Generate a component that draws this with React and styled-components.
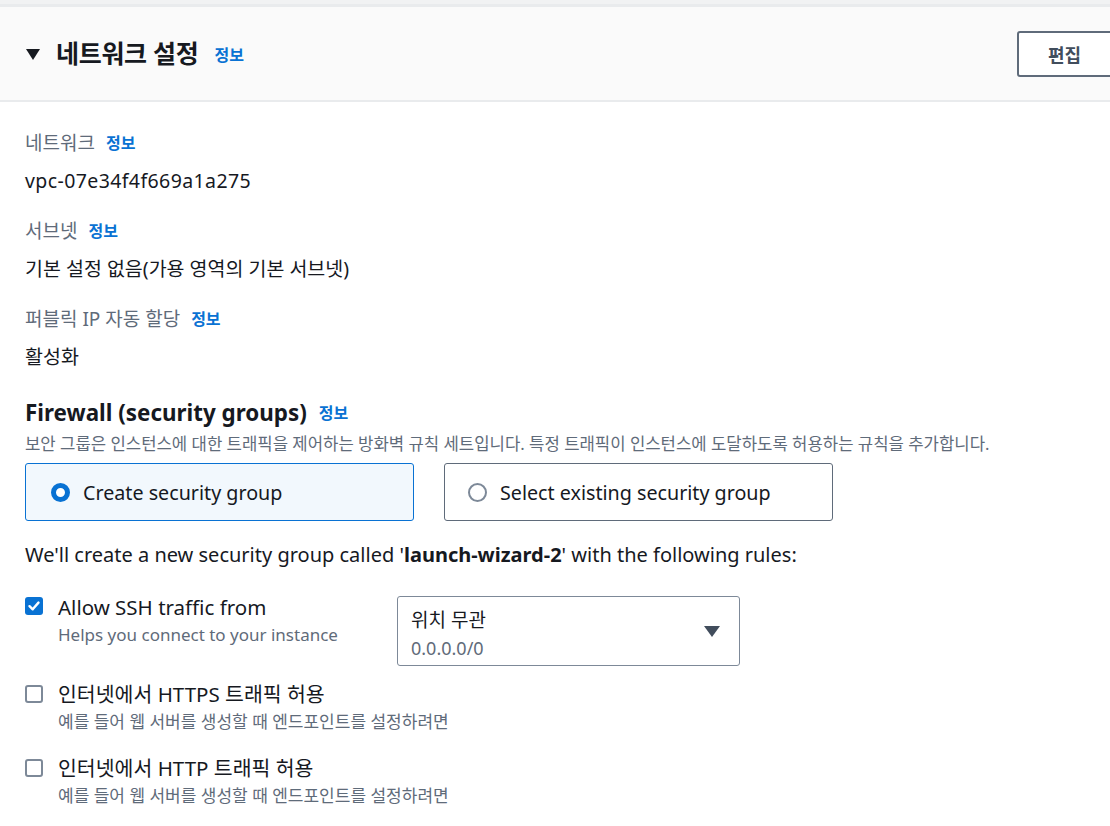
import React from 'react';
import styled, { createGlobalStyle } from 'styled-components';

const GlobalStyle = createGlobalStyle`
  body {
    margin: 0;
    background: #ffffff;
    font-family: 'Noto Sans', 'Noto Sans CJK KR', sans-serif;
    color: #16191f;
  }
`;

const Page = styled.div`
  width: 1110px;
  height: 826px;
  overflow: hidden;
  border-top: 4px solid #f1f2f3;
`;

const Header = styled.div`
  display: flex;
  align-items: center;
  justify-content: space-between;
  height: 93px;
  padding-left: 26px;
  background: #fafafa;
  border-top: 3px solid #e9ebed;
  border-bottom: 2px solid #e9ebed;
  overflow: hidden;
`;

const TitleWrap = styled.div`
  display: flex;
  align-items: center;
`;

const Caret = styled.span`
  width: 0;
  height: 0;
  border-left: 7px solid transparent;
  border-right: 7px solid transparent;
  border-top: 11px solid #16191f;
  margin-right: 16px;
  margin-top: 1px;
`;

const Title = styled.h2`
  margin: 0 0 3px;
  font-size: 25px;
  font-weight: 700;
  letter-spacing: -0.3px;
  color: #16191f;
`;

const Info = styled.a`
  color: #0972d3;
  font-weight: 700;
  font-size: ${(p) => p.size || 16}px;
  text-decoration: none;
  margin-left: ${(p) => p.gap || 11}px;
`;

const EditButton = styled.button`
  width: 100px;
  height: 46px;
  margin-right: -7px;
  border: 2px solid #5f6b7a;
  border-radius: 3px;
  background: #ffffff;
  font-family: inherit;
  font-size: 18px;
  font-weight: 700;
  color: #414d5c;
  padding: 0;
  text-align: left;
  text-indent: 29px;
`;

const Body = styled.div`
  padding: 30px 25px 0 25px;
`;

const Field = styled.div`
  margin-bottom: 26px;
`;

const Label = styled.div`
  display: flex;
  align-items: center;
  font-size: 19px;
  line-height: 22px;
  color: #5f6b7a;
  margin-bottom: 14px;
`;

const Value = styled.div`
  font-size: 19.5px;
  line-height: 26px;
  color: #16191f;
  letter-spacing: ${(p) => (p.mono ? 0.4 : 0)}px;
`;

const SectionTitle = styled.h3`
  display: flex;
  align-items: center;
  margin: 30px 0 0;
  font-size: 22.4px;
  line-height: 26px;
  font-weight: 700;
  color: #16191f;
`;

const Desc = styled.div`
  margin-top: 8px;
  font-size: 16.7px;
  line-height: 20px;
  color: #5f6b7a;
  white-space: nowrap;
`;

const Cards = styled.div`
  display: flex;
  gap: 30px;
  margin-top: 9px;
`;

const Card = styled.div`
  width: 389px;
  height: 58px;
  box-sizing: border-box;
  display: flex;
  align-items: center;
  padding-left: ${(p) => (p.selected ? 25 : 23)}px;
  border: 1px solid ${(p) => (p.selected ? '#0972d3' : '#5f6b7a')};
  border-radius: 3px;
  background: ${(p) => (p.selected ? '#f2f8fd' : '#ffffff')};
  font-size: 19.7px;
  color: #16191f;
`;

const Radio = styled.span`
  width: 19px;
  height: 19px;
  box-sizing: border-box;
  border-radius: 50%;
  margin-right: 13px;
  flex: none;
  border: ${(p) => (p.checked ? '5.5px solid #0972d3' : '2px solid #7d8998')};
  background: #ffffff;
`;

const Notice = styled.div`
  margin-top: 22px;
  font-size: 20px;
  line-height: 24px;
  color: #16191f;
  white-space: nowrap;
  b {
    font-weight: 700;
  }
`;

const RuleRow = styled.div`
  display: flex;
  align-items: flex-start;
  margin-top: ${(p) => p.top}px;
`;

const RuleLeft = styled.div`
  display: flex;
  align-items: flex-start;
  width: ${(p) => (p.width ? `${p.width}px` : 'auto')};
  flex: none;
`;

const Box = styled.span`
  width: 18px;
  height: 18px;
  box-sizing: border-box;
  flex: none;
  margin-top: ${(p) => (p.checked ? 1 : 2)}px;
  margin-right: 15px;
  border-radius: 3px;
  display: flex;
  align-items: center;
  justify-content: center;
  background: ${(p) => (p.checked ? '#0972d3' : '#ffffff')};
  border: ${(p) => (p.checked ? 'none' : '2px solid #7d8998')};
`;

const RuleText = styled.div`
  display: flex;
  flex-direction: column;
  white-space: nowrap;
`;

const RuleTitle = styled.div`
  font-size: 20.5px;
  line-height: 22px;
  color: #16191f;
`;

const RuleHint = styled.div`
  margin-top: 7px;
  font-size: 17px;
  line-height: 20px;
  color: #5f6b7a;
`;

const Select = styled.div`
  width: 343px;
  height: 70px;
  box-sizing: border-box;
  display: flex;
  align-items: center;
  justify-content: space-between;
  padding: 0 19px 0 13px;
  border: 1px solid #7d8998;
  border-radius: 3px;
`;

const SelectText = styled.div`
  display: flex;
  flex-direction: column;
  gap: 4px;
  margin-top: 5px;
`;

const SelectMain = styled.div`
  font-size: 19px;
  line-height: 24px;
  color: #16191f;
`;

const SelectSub = styled.div`
  font-size: 18px;
  line-height: 24px;
  color: #5f6b7a;
`;

const Arrow = styled.span`
  width: 0;
  height: 0;
  border-left: 8px solid transparent;
  border-right: 8px solid transparent;
  border-top: 11px solid #414d5c;
`;

const Check = () => (
  <svg width="14" height="14" viewBox="0 0 14 14">
    <path d="M2.5 7.2 L5.7 10.3 L11.5 3.6" fill="none" stroke="#ffffff" strokeWidth="2.4" strokeLinecap="round" strokeLinejoin="round" />
  </svg>
);

const fields = [
  { label: '네트워크', value: 'vpc-07e34f4f669a1a275', mono: true },
  { label: '서브넷', value: '기본 설정 없음(가용 영역의 기본 서브넷)' },
  { label: '퍼블릭 IP 자동 할당', value: '활성화' },
];

const rules = [
  { title: 'HTTPS', top: 17 },
  { title: 'HTTP', top: 25 },
];

export default function App() {
  return (
    <Page>
      <GlobalStyle />
      <Header>
        <TitleWrap>
          <Caret />
          <Title>네트워크 설정</Title>
          <Info gap={16}>정보</Info>
        </TitleWrap>
        <EditButton>편집</EditButton>
      </Header>
      <Body>
        {fields.map((f) => (
          <Field key={f.label}>
            <Label>
              {f.label}
              <Info>정보</Info>
            </Label>
            <Value mono={f.mono}>{f.value}</Value>
          </Field>
        ))}
        <SectionTitle>
          Firewall (security groups)
          <Info gap={12}>정보</Info>
        </SectionTitle>
        <Desc>
          보안 그룹은 인스턴스에 대한 트래픽을 제어하는 방화벽 규칙 세트입니다. 특정 트래픽이 인스턴스에 도달하도록 허용하는 규칙을 추가합니다.
        </Desc>
        <Cards>
          <Card selected>
            <Radio checked />
            Create security group
          </Card>
          <Card>
            <Radio />
            Select existing security group
          </Card>
        </Cards>
        <Notice>
          We'll create a new security group called '<b>launch-wizard-2</b>' with the following rules:
        </Notice>
        <RuleRow top={29}>
          <RuleLeft width={372}>
            <Box checked>
              <Check />
            </Box>
            <RuleText>
              <RuleTitle>Allow SSH traffic from</RuleTitle>
              <RuleHint>Helps you connect to your instance</RuleHint>
            </RuleText>
          </RuleLeft>
          <Select>
            <SelectText>
              <SelectMain>위치 무관</SelectMain>
              <SelectSub>0.0.0.0/0</SelectSub>
            </SelectText>
            <Arrow />
          </Select>
        </RuleRow>
        {rules.map((r) => (
          <RuleRow key={r.title} top={r.top}>
            <RuleLeft>
              <Box />
              <RuleText>
                <RuleTitle>인터넷에서 {r.title} 트래픽 허용</RuleTitle>
                <RuleHint>예를 들어 웹 서버를 생성할 때 엔드포인트를 설정하려면</RuleHint>
              </RuleText>
            </RuleLeft>
          </RuleRow>
        ))}
      </Body>
    </Page>
  );
}
